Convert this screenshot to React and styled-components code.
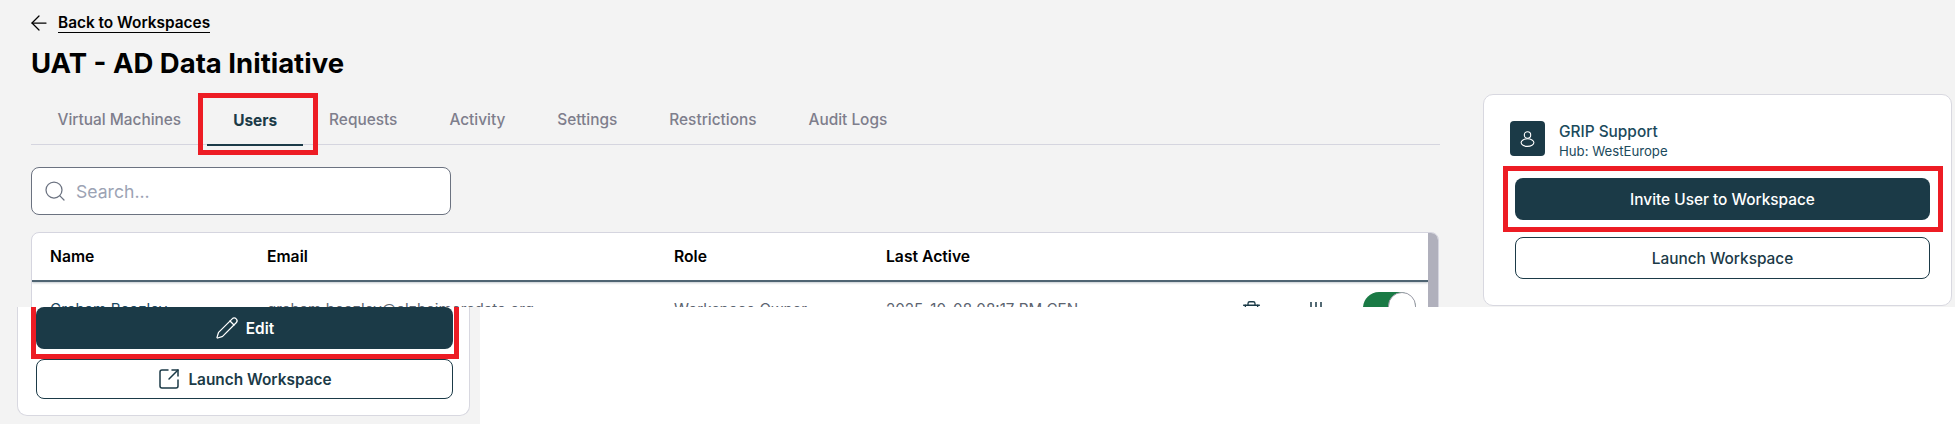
import React from 'react';
import styled, { createGlobalStyle, css } from 'styled-components';
import { ArrowLeft, Search, Pencil, SquareArrowOutUpRight, Trash2 } from 'lucide-react';

const tabs = ['Virtual Machines', 'Users', 'Requests', 'Activity', 'Settings', 'Restrictions', 'Audit Logs'];

export default function App() {
  return (
    <>
      <GlobalStyle />
      <Screen>
        <Main>
          <BackRow>
            <ArrowLeft size={24} strokeWidth={1.25} />
            <BackLink>Back to Workspaces</BackLink>
          </BackRow>
          <Title>UAT - AD Data Initiative</Title>
          <TabBar>
            {tabs.map((tab) => (
              <Tab key={tab} $active={tab === 'Users'}>
                {tab}
              </Tab>
            ))}
          </TabBar>
          <SearchBox>
            <Search size={24} strokeWidth={1.25} color="#6b7280" />
            <SearchInput placeholder="Search..." readOnly />
          </SearchBox>
          <TableCard>
            <TableBody>
              <HeaderRow>
                <span>Name</span>
                <span>Email</span>
                <span>Role</span>
                <span>Last Active</span>
              </HeaderRow>
              <UserRow>
                <NameCell>Graham Beazley</NameCell>
                <span>graham.beazley@alzheimersdata.org</span>
                <span>Workspace Owner</span>
                <span>2025-10-08 08:17 PM CEN</span>
                <Actions>
                  <Trash2 size={21} strokeWidth={1.5} color="#1b3a47" />
                  <BarsIcon />
                  <Toggle />
                </Actions>
              </UserRow>
            </TableBody>
            <Scrollbar />
          </TableCard>
        </Main>
        <Aside>
          <InfoCard>
            <HubRow>
              <Avatar>
                <PersonIcon />
              </Avatar>
              <HubText>
                <HubName>GRIP Support</HubName>
                <HubLocation>Hub: WestEurope</HubLocation>
              </HubText>
            </HubRow>
            <SolidButton $frame="invite">Invite User to Workspace</SolidButton>
            <OutlineButton>Launch Workspace</OutlineButton>
          </InfoCard>
        </Aside>
      </Screen>
      <BottomCrop>
        <CropCard>
          <SolidButton $frame="edit" $strong>
            <Pencil size={24} strokeWidth={1.25} />
            Edit
          </SolidButton>
          <OutlineButton $strong>
            <SquareArrowOutUpRight size={24} strokeWidth={1.5} />
            Launch Workspace
          </OutlineButton>
        </CropCard>
      </BottomCrop>
    </>
  );
}

function BarsIcon() {
  return (
    <svg width="14" height="20" viewBox="0 0 14 20" fill="none" stroke="#1b3a47" strokeWidth="1.5">
      <path d="M2 2v16M7 2v16M12 2v16M0 11h4M5 8h4M10 11h4" />
    </svg>
  );
}

function PersonIcon() {
  return (
    <svg width="15" height="16" viewBox="0 0 15 16" fill="none" stroke="#fff" strokeWidth="1.1">
      <circle cx="7.5" cy="4" r="3.2" />
      <ellipse cx="7.5" cy="11.6" rx="6.4" ry="3.8" />
    </svg>
  );
}

const GlobalStyle = createGlobalStyle`
  html, body {
    margin: 0;
    background: #fff;
  }
  body {
    font-family: Inter, "Liberation Sans", sans-serif;
  }
  * {
    box-sizing: border-box;
  }
`;

const Screen = styled.div`
  height: 307px;
  overflow: hidden;
  background: #f3f3f3;
  display: flex;
  padding-left: 31px;
`;

const Main = styled.div`
  width: 1409px;
  flex-shrink: 0;
  padding-top: 13px;
`;

const BackRow = styled.div`
  display: flex;
  align-items: center;
  gap: 7px;
  height: 20px;
  margin-left: -4px;
  color: #000;
`;

const BackLink = styled.a`
  font-size: 15.4px;
  font-weight: 600;
  line-height: 19px;
  border-bottom: 1px solid #000;
`;

const Title = styled.h1`
  margin: 15px 0 0;
  font-size: 27.5px;
  font-weight: 700;
  line-height: 30px;
  color: #000;
`;

const TabBar = styled.div`
  display: flex;
  margin-top: 22px;
  padding-left: 0.5px;
  height: 45px;
  border-bottom: 1px solid #d5d5df;
`;

const Tab = styled.div`
  position: relative;
  padding: 11px 26px 0;
  height: 46px;
  font-size: 15.4px;
  line-height: 18px;
  font-weight: 500;
  color: #7e7e8c;
  ${(p) =>
    p.$active &&
    css`
      font-weight: 700;
      color: #1b3a47;
      padding-top: 12px;
      border-bottom: 2px solid #1b3a47;
      &::after {
        content: '';
        position: absolute;
        inset: -7px -15px -11px -9px;
        border: 5px solid #ed1c24;
      }
    `}
`;

const SearchBox = styled.div`
  display: flex;
  align-items: center;
  gap: 9px;
  width: 420px;
  height: 48px;
  margin-top: 22px;
  padding: 0 11px;
  background: #fff;
  border: 1px solid #6b7280;
  border-radius: 8px;
`;

const SearchInput = styled.input`
  flex: 1;
  border: none;
  outline: none;
  background: none;
  padding: 0;
  font: 400 17.6px Inter, sans-serif;
  &::placeholder {
    color: #9ca3b4;
  }
`;

const TableCard = styled.div`
  display: flex;
  margin-top: 17px;
  width: 1408px;
  height: 200px;
  background: #fff;
  border: 1px solid #d5d5df;
  border-radius: 8px;
  overflow: hidden;
`;

const TableBody = styled.div`
  flex: 1;
`;

const Scrollbar = styled.div`
  width: 10px;
  background: #b0b0bc;
`;

const Columns = styled.div`
  display: grid;
  grid-template-columns: 217px 407px 212px 1fr;
  padding-left: 18px;
`;

const HeaderRow = styled(Columns)`
  height: 49px;
  align-items: center;
  border-bottom: 2px solid #4f6472;
  box-shadow: 0 1px 2px rgba(80, 100, 114, 0.35);
  font-size: 15.7px;
  font-weight: 600;
  color: #000;
`;

const UserRow = styled(Columns)`
  grid-template-columns: 217px 407px 212px 330px 1fr;
  padding-top: 19px;
  font-size: 15.2px;
  line-height: 18px;
  color: #5c6470;
`;

const NameCell = styled.span`
  color: #1b4a63;
`;

const Actions = styled.div`
  display: flex;
  align-items: flex-start;
  margin-top: -1px;
  gap: 47px;
  margin-left: 25px;
`;

const Toggle = styled.div`
  width: 53px;
  height: 32px;
  margin-left: -7px;
  margin-top: -8px;
  border-radius: 16px;
  background: #1a7a45;
  display: flex;
  justify-content: flex-end;
  &::after {
    content: '';
    width: 26px;
    height: 32px;
    border-radius: 16px;
    background: #fff;
    border: 1px solid #9a9aa6;
  }
`;

const Aside = styled.div`
  margin-left: 43px;
  padding-top: 94px;
`;

const InfoCard = styled.div`
  width: 469px;
  height: 212px;
  padding: 26px 21px 0 31px;
  background: #fff;
  border: 1px solid #d8d8e0;
  border-radius: 10px;
`;

const HubRow = styled.div`
  display: flex;
  gap: 14px;
  margin-left: -5px;
  height: 57px;
`;

const Avatar = styled.div`
  width: 35px;
  height: 35px;
  border-radius: 4px;
  background: #1b3a47;
  display: flex;
  align-items: center;
  justify-content: center;
`;

const HubText = styled.div`
  display: flex;
  flex-direction: column;
  padding-top: 1px;
`;

const HubName = styled.div`
  font-size: 15.4px;
  font-weight: 500;
  line-height: 20px;
  color: #1b4a5c;
`;

const HubLocation = styled.div`
  font-size: 13.2px;
  line-height: 18px;
  color: #1b4a5c;
`;

const buttonBase = css`
  display: flex;
  align-items: center;
  justify-content: center;
  gap: 7px;
  width: 100%;
  border-radius: 8px;
  font-size: 15.4px;
  font-weight: ${(p) => (p.$strong ? 600 : 500)};
  font-family: inherit;
`;

const frames = {
  invite: css`
    inset: -12px -13px -12px -12px;
    border: 5px solid #ed1c24;
  `,
  edit: css`
    inset: 0 -6px -10px -5px;
    border: 5px solid #ed1c24;
    border-top: none;
  `,
};

const SolidButton = styled.div`
  ${buttonBase}
  position: relative;
  height: 42px;
  background: #1b3a47;
  color: #fff;
  &::after {
    content: '';
    position: absolute;
    ${(p) => frames[p.$frame]}
  }
`;

const OutlineButton = styled.div`
  ${buttonBase}
  height: ${(p) => (p.$strong ? '40px' : '42px')};
  margin-top: ${(p) => (p.$strong ? '10px' : '17px')};
  background: #fff;
  border: 1px solid #1b3a47;
  color: #1b3a47;
`;

const BottomCrop = styled.div`
  width: 480px;
  height: 117px;
  padding-left: 17px;
  background: #f3f3f3;
`;

const CropCard = styled.div`
  width: 453px;
  height: 109px;
  padding: 0 16px 0 18px;
  background: #fff;
  border: 1px solid #d8d8e0;
  border-top: none;
  border-radius: 0 0 10px 10px;
`;
